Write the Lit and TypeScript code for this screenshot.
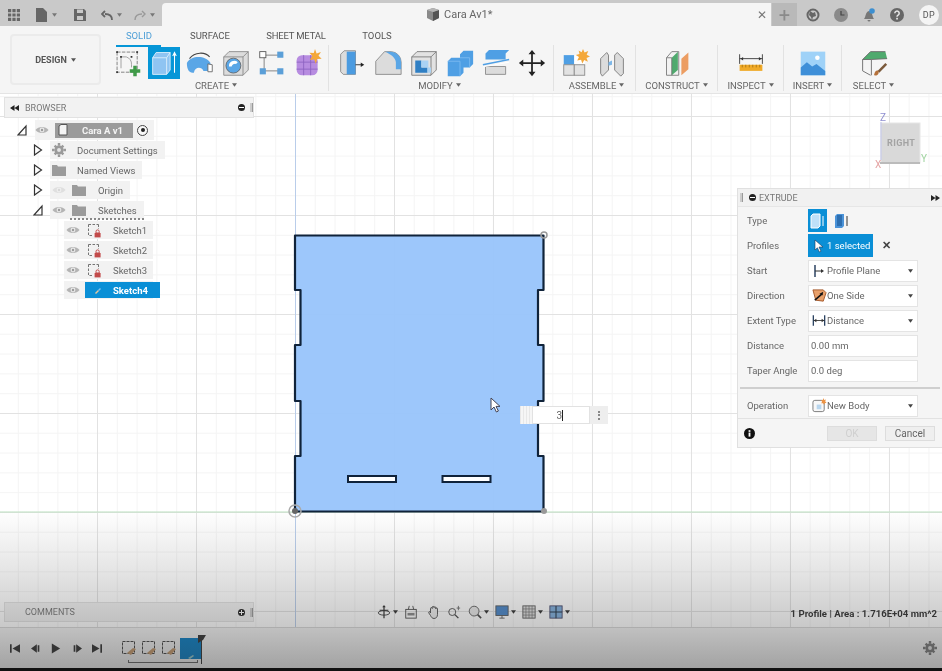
import {LitElement, css, html, nothing} from 'lit';
import {customElement} from 'lit/decorators.js';

const caret = html`<svg class="caret" viewBox="0 0 6 4" width="5" height="4"><path d="M0 0h6L3 4z" fill="currentColor"/></svg>`;

const eye = (faded = false) => html`<svg class="eye ${faded ? 'faded' : ''}" viewBox="0 0 14 10" width="14" height="10">
  <path d="M0.5 5C3 1 11 1 13.5 5 11 9 3 9 0.5 5Z" fill="#b4b4b4"/><circle cx="7" cy="5" r="2.4" fill="#e8e8e8"/><circle cx="7" cy="5" r="1.2" fill="#9a9a9a"/>
</svg>`;

const folder = html`<svg viewBox="0 0 14 12" width="14" height="12"><path d="M0 1h5l1 1.5h8V12H0z" fill="#9b9b9b"/></svg>`;
const gear = (size = 14, color = '#9a9a9a') => html`<svg viewBox="0 0 16 16" width=${size} height=${size}>
  <g fill=${color}><circle cx="8" cy="8" r="5.2"/><path d="M6.6 0h2.8v3H6.6zM6.6 13h2.8v3H6.6zM0 6.6h3v2.8H0zM13 6.6h3v2.8h-3zM2 4l2-2 2 2-2 2zM10 4l2-2 2 2-2 2zM2 12l2-2 2 2-2 2zM10 12l2-2 2 2-2 2z"/></g>
  <circle cx="8" cy="8" r="2.2" fill="#e4e4e4"/>
</svg>`;
const sketchLock = html`<svg viewBox="0 0 15 15" width="15" height="15">
  <path d="M1.5 1.5H11.5M1.5 1.5V12.5H5M11.5 1.5V6" fill="none" stroke="#666" stroke-width=".9" stroke-dasharray="2.5 1.5"/>
  <path d="M9 8.5a1.6 1.6 0 0 1 3.2 0V10H9z" fill="none" stroke="#c34b4b"/><rect x="7.6" y="10" width="6" height="4.4" fill="#c34b4b"/>
</svg>`;
const dblLeft = html`<svg viewBox="0 0 9 6" width="9" height="6"><path d="M4.5 0v6L0 3zM9 0v6L4.5 3z" fill="#222"/></svg>`;
const dblRight = html`<svg viewBox="0 0 9 6" width="9" height="6"><path d="M0 0v6l4.5-3zM4.5 0v6L9 3z" fill="#222"/></svg>`;

const iconSketch = html`<svg viewBox="0 0 32 32">
  <rect x="3.5" y="3.5" width="23" height="23" fill="none" stroke="#666" stroke-width=".9" stroke-dasharray="4 1.5"/>
  <path d="M8 9h6a9 9 0 0 1 6 9v3M8 9v13" fill="none" stroke="#999"/>
  <g fill="#333"><rect x="2.5" y="2.5" width="2" height="2"/><rect x="25.5" y="2.5" width="2" height="2"/><rect x="2.5" y="25.5" width="2" height="2"/><rect x="7" y="8" width="2" height="2"/><rect x="19" y="8" width="2" height="2"/></g>
  <path d="M22 19h4v4h4v4h-4v4h-4v-4h-4v-4h4z" fill="#3f9a48"/>
</svg>`;
const iconExtrude = html`<svg viewBox="0 0 32 32">
  <path d="M3 10l4-6h16v20l-4 5H3z" fill="#8fc4f2" stroke="#dff0fb"/><path d="M3 10h16v19M19 10l4-6" fill="none" stroke="#dff0fb"/>
  <path d="M28 27V5M26 8l2-4 2 4" fill="none" stroke="#fff" stroke-width="1.2"/>
</svg>`;
const iconRevolve = html`<svg viewBox="0 0 32 32">
  <path d="M4 11C10 3 22 3 27 9" fill="none" stroke="#444" stroke-width="1.2"/>
  <path d="M1 16C6 7 22 7 28 16L27 25H20C18 20 10 20 9 27 4 28 1 24 1 16Z" fill="#5aa6e6"/>
  <path d="M25 17l5 1v8h-5z" fill="#fff" stroke="#666"/>
</svg>`;
const iconHole = html`<svg viewBox="0 0 32 32">
  <path d="M2 9l6-6h22v21l-6 6H2z" fill="#dcdcdc" stroke="#888"/><path d="M2 9h22v21M24 9l6-6" fill="none" stroke="#888"/>
  <circle cx="13" cy="19" r="8.5" fill="#5aa6e6" stroke="#666"/><path d="M8 20a6 6 0 0 1 10-5l-2 2a4 4 0 0 0-5 3z" fill="#fff"/>
</svg>`;
const iconPattern = html`<svg viewBox="0 0 32 32">
  <path d="M7 7h18M7 7v18M7 25h18" stroke="#777" fill="none"/>
  <rect x="2" y="3" width="7" height="7" fill="#fff" stroke="#555"/>
  <rect x="22" y="3" width="7" height="7" fill="#5b9fd8"/><rect x="2" y="22" width="7" height="7" fill="#5b9fd8"/><rect x="22" y="22" width="7" height="7" fill="#5b9fd8"/>
</svg>`;
const iconCreateForm = html`<svg viewBox="0 0 32 32">
  <rect x="3" y="7" width="24" height="23" rx="6" fill="#b78ce0"/><path d="M3 15h24M3 23h24M11 7v23M19 7v23" stroke="#8e62c2" fill="none"/>
  <path d="M24 0l1.8 5 5-1.6-2.8 4.4 3.6 3.4-5.2.2L25 17l-2-5.4-5 1 3-4.6-3.4-3.6 5 .3z" fill="#f4a83a"/>
</svg>`;
const iconPress = html`<svg viewBox="0 0 32 32">
  <path d="M3 6l4-4h13v27H6l-3-3z" fill="#dcdcdc" stroke="#888"/><path d="M10 3h10v26H10z" fill="#4b9be0"/>
  <path d="M20 18h7" stroke="#222"/><path d="M26 15.5l4 2.5-4 2.5z" fill="#222"/>
</svg>`;
const iconFillet = html`<svg viewBox="0 0 32 32">
  <path d="M2 14L12 3h8a12 12 0 0 1 11 12v14H2z" fill="#dcdcdc" stroke="#888"/>
  <path d="M13 3h7a12 12 0 0 1 11 12v8h-6V15c0-5-6-9-12-12z" fill="#5aa6e6"/>
</svg>`;
const iconShell = html`<svg viewBox="0 0 32 32">
  <path d="M2 9l6-6h22v21l-6 6H2z" fill="#e2e2e2" stroke="#777"/><path d="M2 9h22v21M24 9l6-6" fill="none" stroke="#777"/>
  <path d="M6 13h7v8h7v6H6z" fill="#2f7fc4"/><path d="M13 13h8v8h-8zM20 21h4v6h-4z" fill="#a9d2f4"/>
</svg>`;
const iconCombine = html`<svg viewBox="0 0 32 32">
  <path d="M2 14l4-4h10V6l4-4h11v15l-4 4h-7v6l-4 4H2z" fill="#4f9fe4"/><path d="M2 14h14v17M16 10h11v11" fill="none" stroke="#7cbaf0"/>
</svg>`;
const iconOffset = html`<svg viewBox="0 0 32 32">
  <path d="M4 5l4-4h23l-4 4v7H4z" fill="#4f9fe4"/><path d="M1 18L31 12" stroke="#4f9fe4" stroke-width="1.5"/>
  <path d="M4 20h23v9H4z" fill="#dcdcdc" stroke="#888"/><path d="M1 20.5L31 15" stroke="#fff"/>
</svg>`;
const iconMove = html`<svg viewBox="0 0 32 32">
  <path d="M16 5v22M5 16h22" stroke="#222" stroke-width="2"/>
  <path d="M16 1l4 5h-8zM16 31l4-5h-8zM1 16l5-4v8zM31 16l-5-4v8z" fill="#222"/>
</svg>`;
const iconComponent = html`<svg viewBox="0 0 32 32">
  <rect x="2" y="7" width="12" height="11" fill="#4f9fe4"/><rect x="14" y="7" width="12" height="11" fill="#fff"/>
  <rect x="2" y="18" width="12" height="12" fill="#e2e2e2" stroke="#888"/><rect x="14" y="18" width="12" height="12" fill="#e2e2e2" stroke="#888"/>
  <path d="M24 0l1.8 4 4.2-1.6-1.8 4.2L32 8.600l-4 1.6 1.6 4.4-4.2-2-2.2 4-1.4-4.4-4.4 1 2-4-3.6-2.4 4.2-1L19 1.6l3.4 2.2z" fill="#f4a83a"/>
</svg>`;
const iconJoint = html`<svg viewBox="0 0 32 32">
  <path d="M3 11l7-7 2 3v17l-7 7-2-3z" fill="#dcdcdc" stroke="#777"/><path d="M29 11l-7-7-3 3v17l7 7 3-3z" fill="#dcdcdc" stroke="#777"/>
  <path d="M12 15l4-2v5l-4 1z" fill="#7db7e8"/>
</svg>`;
const iconConstruct = html`<svg viewBox="0 0 32 32">
  <path d="M4 10l6-7h8v27H4z" fill="#f2f2f2" stroke="#777"/><path d="M10 10l7-7v21l-7 6z" fill="#4faa6e"/><path d="M4 10h6v20" fill="none" stroke="#777"/>
  <path d="M21 11l8-7v19l-8 7z" fill="#ec9d62"/>
</svg>`;
const iconInspect = html`<svg viewBox="0 0 32 32">
  <path d="M3 6v11M29 6v11M3 11h26" stroke="#333" fill="none"/><path d="M4 11l3-2v4zM28 11l-3-2v4z" fill="#333"/>
  <rect x="3" y="18" width="26" height="7" fill="#f0aa28"/><path d="M6 18v3M10 18v3M14 18v3M18 18v3M22 18v3M26 18v3" stroke="#a87413"/>
</svg>`;
const iconInsert = html`<svg viewBox="0 0 32 32">
  <rect x="2" y="3" width="28" height="27" fill="#9fd2f8"/><circle cx="21" cy="10" r="2.6" fill="#fff"/>
  <path d="M2 30V21l7-6 6 5 5-3 10 8v5z" fill="#3e8fd8"/>
</svg>`;
const iconSelect = html`<svg viewBox="0 0 32 32">
  <path d="M3 12L12 3h17l2 8z" fill="#4faa6e"/><path d="M3 12v13l9 5M3 12h10v18M13 12l18-1M3 12L12 3h17" fill="none" stroke="#666"/>
  <path d="M20 25l9-9 2 2-9 9z" fill="#7b5a3c"/><path d="M16 30c1-5 3-6 5-5 1 2 0 6-5 5z" fill="#b5713a"/>
</svg>`;

const cursorIcon = html`<svg class="cursor" viewBox="0 0 12 16" width="12" height="16"><path d="M1 1v12l3-3 2.4 5 2-1-2.4-4.6H10z" fill="#fff" stroke="#445" stroke-width="1"/></svg>`;

const extrudeA = html`<svg viewBox="0 0 16 16" width="16" height="16"><path d="M1 3l2-2h7v12l-2 2H1z" fill="#bfe0f8" stroke="#fff"/><path d="M13 3v10" stroke="#fff"/></svg>`;
const extrudeB = html`<svg viewBox="0 0 16 16" width="16" height="16"><path d="M1 3l2-2h7v12l-2 2H1z" fill="#4b93d8"/><path d="M3 2h5v11H3z" fill="#2e6fb0"/><path d="M13 3v10" stroke="#333"/></svg>`;
const startIcon = html`<svg viewBox="0 0 14 14" width="14" height="14"><path d="M3 1v12" stroke="#1d3557" stroke-width="1.4"/><path d="M3 7h7" stroke="#333"/><path d="M9 5l3 2-3 2z" fill="#333"/></svg>`;
const dirIcon = html`<svg viewBox="0 0 16 16" width="15" height="15"><path d="M1 2h11l3 3-3 9-8-1z" fill="#e8a06a" stroke="#a3582a"/><path d="M3 13L11 6" stroke="#111" stroke-width="1.6"/><path d="M12 4l-1 4-3-2z" fill="#111"/></svg>`;
const distIcon = html`<svg viewBox="0 0 16 14" width="14" height="13"><path d="M1.5 1v12M14.5 1v12" stroke="#1d3557" stroke-width="1.4"/><path d="M2 7h12" stroke="#333"/><path d="M2 7l3-2v4zM14 7l-3-2v4z" fill="#333"/></svg>`;
const bodyIcon = html`<svg viewBox="0 0 16 16" width="15" height="15"><rect x="1" y="2.5" width="12" height="12" rx="2" fill="#f8f8f8" stroke="#777"/><rect x="5" y="7" width="5" height="5" fill="#b9d6ee"/><path d="M12 0l1 2 2-.5L14 3.500l1.5 1.5-2 .5L13 7.5l-1.2-2-2 .2 1-1.8L9.600 2l2 .2z" fill="#ec9344"/></svg>`;
const selectArrow = html`<svg viewBox="0 0 10 14" width="10" height="14"><path d="M1 1v10l2.4-2.2L5.4 13l1.6-.8L5 8h4z" fill="#fff" stroke="#1d3557" stroke-width=".6"/></svg>`;
const infoIcon = html`<svg viewBox="0 0 12 12" width="11" height="11"><circle cx="6" cy="6" r="6" fill="#111"/><rect x="5" y="5" width="2" height="4.4" fill="#fff"/><rect x="5" y="2.4" width="2" height="1.8" fill="#fff"/></svg>`;

const navOrbit = html`<svg viewBox="0 0 16 16" width="14" height="14"><path d="M8 1v14M3 6h10" stroke="#333" stroke-width="1.4"/><ellipse cx="8" cy="9" rx="6.5" ry="2.6" fill="none" stroke="#333"/><path d="M8 0l2 2.6H6z" fill="#333"/></svg>`;
const navLook = html`<svg viewBox="0 0 14 16" width="14" height="14"><rect x="1" y="5" width="12" height="10" fill="none" stroke="#444"/><path d="M3 9h8v3H3z" fill="#888"/><path d="M4 5l1-4M10 5L9 1" stroke="#444"/></svg>`;
const navHand = html`<svg viewBox="0 0 16 16" width="14" height="14"><path d="M4 9V4a1 1 0 0 1 2 0V2.6a1 1 0 0 1 2 0V3a1 1 0 0 1 2 0v1.4a1 1 0 0 1 2 0V11c0 3-2 4.4-4 4.4S5 14 4 12L2 9c-.6-1 .8-2 1.6-1z" fill="#eee" stroke="#444"/></svg>`;
const navZoomFit = html`<svg viewBox="0 0 16 16" width="14" height="14"><circle cx="6" cy="8" r="4" fill="none" stroke="#444"/><path d="M9 11l4 4" stroke="#444" stroke-width="1.6"/><path d="M13 1v5M11 3.5h4" stroke="#666"/></svg>`;
const navZoom = html`<svg viewBox="0 0 16 16" width="14" height="14"><circle cx="7" cy="7" r="5.6" fill="#e8e8e8" stroke="#555"/><path d="M11 11l4 4" stroke="#444" stroke-width="1.8"/></svg>`;
const navDisplay = html`<svg viewBox="0 0 16 16" width="14" height="14"><rect x="1" y="1" width="14" height="11" fill="#4a86c8" stroke="#555"/><path d="M5 15h6M8 12v3" stroke="#555"/></svg>`;
const navGrid = html`<svg viewBox="0 0 16 16" width="14" height="14"><rect x="1" y="1" width="14" height="14" fill="#ddd" stroke="#555"/><path d="M4.5 1v14M8 1v14M11.5 1v14M1 4.5h14M1 8h14M1 11.5h14" stroke="#666" stroke-width=".7"/></svg>`;
const navView = html`<svg viewBox="0 0 16 16" width="14" height="14"><rect x="1" y="1" width="14" height="14" fill="#7faedc" stroke="#446"/><path d="M8 1v14M1 8h14" stroke="#234" stroke-width="1.2"/></svg>`;

const tlSketch = html`<svg viewBox="0 0 16 16" width="16" height="16"><rect x="1.5" y="1.5" width="12" height="12" fill="none" stroke="#444" stroke-dasharray="3 1"/><path d="M6 13l6-5 3 1-5 6z" fill="#c89c6e"/></svg>`;

const tree = [
  {label: 'Document Settings', icon: gear(), tri: 'closed', eye: false},
  {label: 'Named Views', icon: folder, tri: 'closed', eye: false},
  {label: 'Origin', icon: folder, tri: 'closed', eye: true, faded: true},
  {label: 'Sketches', icon: folder, tri: 'open', eye: true, wavy: true},
];
const sketches = ['Sketch1', 'Sketch2', 'Sketch3'];

const controls = [
  {label: 'Start', icon: startIcon, value: 'Profile Plane'},
  {label: 'Direction', icon: dirIcon, value: 'One Side'},
  {label: 'Extent Type', icon: distIcon, value: 'Distance'},
];

@customElement('app-root')
export class AppRoot extends LitElement {
  static styles = css`
    :host {
      display: block;
      height: 671px;
      overflow: hidden;
      font-family: Roboto, "Liberation Sans", Arial, sans-serif;
      color: #555;
      font-size: 9.5px;
    }
    .app {
      position: relative;
      height: 671px;
      display: flex;
      flex-direction: column;
      filter: blur(0.45px);
      background: #fff;
    }
    svg { display: block; flex: none; }

    /* title bar */
    .titlebar {
      display: flex;
      height: 26px;
      flex: none;
      padding-top: 3px;
      box-sizing: border-box;
      background: #c9c9c9;
    }
    .quick {
      width: 162px;
      display: flex;
      align-items: center;
      color: #555;
      box-sizing: border-box;
      padding-left: 8px;
      flex: none;
    }
    .quick .gap1 { margin-left: 16px; }
    .quick .gap2 { margin-left: 17px; }
    .quick .gap3 { margin-left: 15px; }
    .quick .gap4 { margin-left: 12px; }
    .quick .caret { margin-left: 4px; color: #777; }
    .quick .faint { color: #999; }
    .doc {
      width: 609px;
      flex: none;
      box-sizing: border-box;
      display: flex;
      justify-content: space-between;
      align-items: center;
      padding: 0 4px 0 265px;
      background: #f5f5f5;
      border-top-left-radius: 4px;
      font-size: 11px;
      color: #666;
    }
    .doc-title { display: flex; align-items: center; gap: 5px; }
    .close { font-size: 12px; color: #777; line-height: 1; }
    .top-right {
      flex: 1;
      display: flex;
      align-items: center;
      color: #666;
    }
    .plus {
      width: 25px;
      height: 23px;
      display: flex;
      align-items: center;
      justify-content: center;
      background: #b9b9b9;
      font-size: 20px;
      color: #8a8a8a;
      margin-left: 1px;
    }
    .top-icons {
      display: flex;
      align-items: center;
      gap: 14px;
      padding-left: 9px;
    }
    .avatar {
      width: 20px;
      height: 20px;
      border-radius: 50%;
      background: #f4f4f4;
      display: flex;
      align-items: center;
      justify-content: center;
      font-size: 9px;
      letter-spacing: .5px;
      margin-left: 15px;
      color: #555;
    }

    /* ribbon */
    .ribbon {
      display: flex;
      height: 68px;
      flex: none;
      background: #f5f5f5;
      border-bottom: 1px solid #e4e4e4;
      box-sizing: border-box;
    }
    .design-wrap { width: 110px; padding: 8px 0 0 10px; box-sizing: border-box; flex: none; }
    .design {
      width: 91px;
      height: 51px;
      box-sizing: border-box;
      border: 2px solid #ebebeb;
      border-radius: 4px;
      background: #f4f4f4;
      display: flex;
      align-items: center;
      justify-content: center;
      gap: 4px;
      font-size: 9px;
      font-weight: bold;
      color: #555;
    }
    .ribbon-main { flex: 1; display: flex; flex-direction: column; }
    .tabs { display: flex; height: 19px; padding-left: 6px; align-items: center; }
    .tab { text-align: center; color: #555; }
    .tab.solid { width: 46px; color: #4e9fd6; }
    .tab.surface { width: 96px; }
    .tab.sheet { width: 76px; letter-spacing: -.2px; }
    .tab.tools { width: 86px; }
    .groups { display: flex; flex: 1; min-height: 0; }
    .group {
      display: flex;
      flex-direction: column;
      align-items: center;
      box-sizing: border-box;
      border-right: 1px solid #e2e2e2;
      margin-bottom: 2px;
    }
    .create { width: 219px; align-items: flex-start; }
    .modify { width: 225px; padding-left: 5px; align-items: flex-start; }
    .assemble { width: 82px; padding-left: 4px; align-items: flex-start; }
    .construct { width: 82px; }
    .inspect { width: 66px; }
    .insert { width: 58px; }
    .select { width: 63px; border-right: 0; }
    .icons { display: flex; height: 35px; align-items: center; }
    .slot { width: 36px; height: 34px; display: flex; align-items: center; justify-content: center; }
    .slot svg { width: 28px; height: 28px; }
    .slot.active { position: relative; background: #0696d7; height: 32px; width: 32px; margin: 0 2px; }
    .create .active::before {
      content: "";
      position: absolute;
      left: -32px;
      top: -2px;
      width: 45px;
      height: 2px;
      background: #0696d7;
    }
    .group-label {
      display: flex;
      align-items: center;
      gap: 3px;
      height: 10px;
      color: #666;
      align-self: center;
    }
    .create .group-label { margin-right: 6px; }
    .modify .group-label { margin-right: 8px; }

    /* viewport */
    .viewport {
      position: relative;
      flex: 1;
      min-height: 0;
      background-color: #fff;
      background-image:
        linear-gradient(to right, #e2e2e2 1px, transparent 1px),
        linear-gradient(to bottom, #e2e2e2 1px, transparent 1px),
        linear-gradient(to right, #f4f4f4 1px, transparent 1px),
        linear-gradient(to bottom, #f4f4f4 1px, transparent 1px);
      background-size: 99px 99px, 99px 99px, 19.8px 19.8px, 19.8px 19.8px;
      background-position: 97px 22px, 97px 22px, 97px 22px, 97px 22px;
    }
    .scene { position: absolute; left: 0; top: 0; }
    .cube-label { font: bold 9px Roboto, "Liberation Sans", Arial, sans-serif; fill: #a3a3a3; letter-spacing: .4px; }
    .axis-label { font: 10px Roboto, "Liberation Sans", Arial, sans-serif; }

    .panel-head {
      display: flex;
      align-items: center;
      box-sizing: border-box;
      height: 21px;
      background: #f2f2f2;
      border: 1px solid #e2e2e2;
      padding: 0 0 0 5px;
      color: #777;
      font-size: 9px;
    }
    .panel-head .name { margin-left: 6px; flex: 1; }
    .minus {
      width: 7px;
      height: 7px;
      border-radius: 50%;
      background: #222;
      position: relative;
      margin-right: 5px;
    }
    .minus::after { content: ""; position: absolute; left: 1px; right: 1px; top: 3px; height: 1px; background: #fff; }
    .minus.add::before { content: ""; position: absolute; top: 1px; bottom: 1px; left: 3px; width: 1px; background: #fff; }
    .grip { width: 2px; height: 9px; background: #ccc; border-right: 1px solid #999; }

    .browser { position: absolute; left: 4px; top: 3px; width: 250px; }
    .tree { display: flex; flex-direction: column; padding-top: 2px; }
    .row { display: flex; align-items: center; height: 20px; color: #666; }
    .tri { width: 10px; height: 12px; flex: none; }
    .pill { display: flex; align-items: center; height: 18px; background: #f2f2f2; }
    .root-row { padding-left: 13px; }
    .root-row .pill { margin-left: 8px; height: 20px; padding-right: 6px; }
    .root-name {
      display: flex;
      align-items: center;
      width: 78px;
      height: 15px;
      background: #9b9b9b;
      color: #f4f4f4;
      font-weight: bold;
      margin-left: 6px;
      box-sizing: border-box;
      padding-left: 3px;
    }
    .root-name span { margin-left: 14px; }
    .radio { width: 9px; height: 9px; border: 1px solid #444; border-radius: 50%; margin-left: 4px; position: relative; background: #f8f8f8; }
    .radio::after { content: ""; position: absolute; inset: 2.5px; border-radius: 50%; background: #222; }
    .l1 { padding-left: 29px; }
    .l1 .pill { margin-left: 7px; padding: 0 7px 0 2px; }
    .l1-icon { width: 14px; display: flex; }
    .doc-text { margin-left: 11px; }
    .eye-gap { margin-left: 6px; }
    .eye-text { margin-left: 12px; }
    .eye.faded { opacity: .3; }
    .pill.wavy { position: relative; }
    .pill.wavy::after {
      content: "";
      position: absolute;
      left: 20px;
      right: 0;
      bottom: -1px;
      border-bottom: 2px dotted #888;
    }
    .l2 { padding-left: 60px; }
    .l2 .pill { width: 89px; padding-left: 2px; box-sizing: border-box; }
    .l2 .sk-icon { margin-left: 7px; }
    .l2 .sk-text { margin-left: 11px; }
    .sk-sel {
      display: flex;
      flex: none;
      align-items: center;
      width: 75px;
      height: 16px;
      margin-left: 5px;
      background: #0a8fd6;
      color: #fff;
      font-weight: bold;
      padding-left: 9px;
      gap: 12px;
      box-sizing: border-box;
    }

    .comments { position: absolute; left: 4px; bottom: 5px; width: 250px; }
    .comments .panel-head { height: 20px; padding-left: 14px; }

    /* extrude dialog */
    .extrude {
      position: absolute;
      left: 737px;
      top: 94px;
      width: 205px;
      height: 260px;
      box-sizing: border-box;
      background: #f5f5f5;
      border: 1px solid #e0e0e0;
      border-right: 0;
      display: flex;
      flex-direction: column;
      color: #666;
    }
    .extrude-head {
      display: flex;
      align-items: center;
      height: 18px;
      flex: none;
      padding: 0 2px 0 2px;
      background: #f1f1f1;
      border-bottom: 1px solid #e6e6e6;
      box-sizing: border-box;
      font-size: 9px;
      color: #777;
    }
    .extrude-head .minus { margin: 0 3px 0 6px; }
    .extrude-head .t { flex: 1; }
    .ex-rows { padding-top: 1px; display: flex; flex-direction: column; }
    .ex-row { display: flex; align-items: center; height: 25px; padding-left: 9px; flex: none; }
    .ex-label { width: 61px; flex: none; }
    .type-btn { width: 19px; height: 23px; display: flex; align-items: center; justify-content: center; }
    .type-btn.on { background: #0a8fd6; }
    .type-btn + .type-btn { margin-left: 5px; }
    .sel-btn {
      display: flex;
      align-items: center;
      gap: 3px;
      width: 65px;
      height: 23px;
      box-sizing: border-box;
      padding-left: 6px;
      background: #0a8fd6;
      color: #fff;
    }
    .x { margin-left: 9px; font-size: 11px; color: #444; font-weight: bold; }
    .dd, .num {
      width: 110px;
      height: 22px;
      box-sizing: border-box;
      display: flex;
      align-items: center;
      background: #fff;
      border: 1px solid #e4e4e4;
    }
    .dd { padding: 0 4px 0 2px; justify-content: flex-start; }
    .dd .val { flex: 1; }
    .dd-icon { width: 16px; display: flex; justify-content: center; }
    .dd .caret { color: #444; }
    .num { padding-left: 2px; }
    .ex-sep { height: 2px; margin: 4px 2px 4px 2px; background: #cfcfcf; flex: none; }
    .ex-foot {
      display: flex;
      align-items: center;
      flex: 1;
      border-top: 1px solid #e2e2e2;
      padding: 0 6px 0 6px;
    }
    .btn {
      width: 50px;
      height: 15px;
      box-sizing: border-box;
      display: flex;
      align-items: center;
      justify-content: center;
      border: 1px solid #ddd;
      background: #efefef;
      font-size: 10px;
    }
    .btn.ok { margin-left: 72px; color: #cfcfcf; background: #e6e6e6; }
    .btn.cancel { margin-left: 8px; color: #666; }

    .float-input {
      position: absolute;
      left: 520px;
      top: 312px;
      width: 88px;
      height: 18px;
      display: flex;
      color: #666;
      font-size: 10px;
    }
    .fi-grip { width: 12px; background: repeating-linear-gradient(to right, #e8e8e8 0 1px, #f6f6f6 1px 3px); }
    .fi-box {
      width: 58px;
      box-sizing: border-box;
      background: #fff;
      border: 1px solid #e2e2e2;
      display: flex;
      align-items: center;
      justify-content: flex-end;
      padding-right: 26px;
    }
    .fi-caret { width: 1px; height: 11px; background: #222; }
    .fi-more {
      flex: 1;
      background: #eee;
      display: flex;
      flex-direction: column;
      align-items: center;
      justify-content: center;
      gap: 1.5px;
    }
    .fi-more i { width: 2px; height: 2px; background: #666; border-radius: 50%; }
    .cursor { position: absolute; left: 490px; top: 303px; }

    .nav {
      position: absolute;
      left: 377px;
      bottom: 8px;
      display: flex;
      align-items: center;
      gap: 6px;
      color: #333;
    }
    .nav-item { display: flex; align-items: center; gap: 2px; }
    .nav .hand { margin-left: 3px; }
    .nav .zoom { margin-left: 1px; }
    .status {
      position: absolute;
      right: 5px;
      bottom: 8px;
      font-size: 9.6px;
      font-weight: bold;
      color: #333;
    }

    /* timeline */
    .timeline {
      flex: none;
      height: 41px;
      box-sizing: border-box;
      display: flex;
      align-items: center;
      background: #f4f4f4;
      border-top: 1px solid #d8d8d8;
      padding-left: 10px;
    }
    .tl-controls { display: flex; gap: 10.5px; align-items: center; }
    .tl-controls svg { width: 10px; height: 11px; }
    .tl-track { display: flex; align-items: center; margin-left: 19px; gap: 4px; position: relative; }
    .tl-track::after {
      content: "";
      position: absolute;
      left: 7px;
      width: 70px;
      top: 22px;
      height: 3px;
      box-sizing: border-box;
      border: 1px solid #666;
      border-top: 0;
    }
    .tl-sel { width: 21px; height: 21px; background: #0a7fc6; display: flex; align-items: flex-end; justify-content: center; margin-left: -1px; position: relative; }
    .tl-sel::before { content: ""; position: absolute; right: -1px; top: 0; width: 1px; height: 26px; background: #333; }
    .tl-sel::after { content: ""; position: absolute; right: -5px; top: -3px; border: 3px solid transparent; border-top: 5px solid #333; border-left: 5px solid #333; }
    .tl-gear { margin-left: auto; margin-right: 5px; }
    .edge { height: 3px; flex: none; background: #111; }
    .fade {
      position: absolute;
      left: 0;
      right: 0;
      top: 510px;
      bottom: 3px;
      pointer-events: none;
      background: linear-gradient(to bottom, rgba(60,60,60,0) 0%, rgba(60,60,60,.12) 35%, rgba(60,60,60,.28) 74%, rgba(50,50,50,.42) 100%);
    }
  `;

  renderTopBar() {
    return html`
      <div class="titlebar">
        <div class="quick">
          <svg viewBox="0 0 13 13" width="12" height="12"><path d="M0 0h3.5v3.5H0zM4.75 0h3.5v3.5h-3.5zM9.5 0H13v3.5H9.5zM0 4.75h3.5v3.5H0zM4.75 4.75h3.5v3.5h-3.5zM9.5 4.75H13v3.5H9.5zM0 9.5h3.5V13H0zM4.75 9.5h3.5V13h-3.5zM9.5 9.5H13V13H9.5z" fill="#666"/></svg>
          <svg class="gap1" viewBox="0 0 12 14" width="12" height="14"><path d="M0 0h7l4 4v10H0z" fill="#666"/></svg>${caret}
          <svg class="gap2" viewBox="0 0 12 12" width="12" height="12"><path d="M0 0h10l2 2v10H0z" fill="#666"/><rect x="3" y="0.5" width="6" height="3.5" fill="#c9c9c9"/><rect x="3" y="7" width="6" height="4" fill="#c9c9c9"/></svg>
          <svg class="gap3" viewBox="0 0 12 12" width="12" height="12"><path d="M11 11c0-4-2-6-7-6M4 2L1 5l3 3" fill="none" stroke="#666" stroke-width="1.8"/></svg>${caret}
          <svg class="gap4" viewBox="0 0 12 12" width="12" height="12"><path d="M1 11c0-4 2-6 7-6M8 2l3 3-3 3" fill="none" stroke="#999" stroke-width="1.4"/></svg><span class="faint">${caret}</span>
        </div>
        <div class="doc">
          <div class="doc-title">
            <svg viewBox="0 0 12 13" width="12" height="13"><path d="M0 2l6-2 6 2v8l-6 3-6-3z" fill="#8a8a8a"/><path d="M6 4l6-2v8l-6 3z" fill="#555"/><path d="M0 2l6 2 6-2-6-2z" fill="#b5b5b5"/></svg>
            <span>Cara Av1*</span>
          </div>
          <span class="close">✕</span>
        </div>
        <div class="top-right">
          <div class="plus">+</div>
          <div class="top-icons">
            <svg viewBox="0 0 14 14" width="14" height="14"><circle cx="7" cy="7" r="5.5" fill="none" stroke="#666" stroke-width="2"/><path d="M4 3l3 2 2-1 1 4-3 1-1 3-1-3-2-2z" fill="#666"/></svg>
            <svg viewBox="0 0 14 14" width="14" height="14"><circle cx="7" cy="7" r="7" fill="#8a8a8a"/><path d="M7 3v4h3.5" fill="none" stroke="#444" stroke-width="1.2"/></svg>
            <svg viewBox="0 0 14 14" width="14" height="14"><path d="M2 11c2-2 1-7 5-8 4 1 3 6 5 8z" fill="#777"/><path d="M5.5 12a1.5 1.5 0 0 0 3 0z" fill="#777"/><circle cx="10" cy="3" r="2.8" fill="#3d8fd0"/></svg>
            <svg viewBox="0 0 14 14" width="14" height="14"><circle cx="7" cy="7" r="7" fill="#666"/><path d="M4.8 5.2a2.2 2.2 0 1 1 3.3 2c-.8.5-1.1.9-1.1 1.6" fill="none" stroke="#e8e8e8" stroke-width="1.5"/><rect x="6.2" y="9.8" width="1.7" height="1.7" fill="#e8e8e8"/></svg>
          </div>
          <div class="avatar">DP</div>
        </div>
      </div>
    `;
  }

  renderGroup(cls: string, label: string, icons: unknown[], active = -1) {
    return html`
      <div class="group ${cls}">
        <div class="icons">
          ${icons.map((ic, i) => html`<div class="slot ${i === active ? 'active' : ''}">${ic}</div>`)}
        </div>
        <div class="group-label">${label}${caret}</div>
      </div>
    `;
  }

  renderRibbon() {
    return html`
      <div class="ribbon">
        <div class="design-wrap"><div class="design">DESIGN ${caret}</div></div>
        <div class="ribbon-main">
          <div class="tabs">
            <div class="tab solid">SOLID</div>
            <div class="tab surface">SURFACE</div>
            <div class="tab sheet">SHEET METAL</div>
            <div class="tab tools">TOOLS</div>
          </div>
          <div class="groups">
            ${this.renderGroup('create', 'CREATE', [iconSketch, iconExtrude, iconRevolve, iconHole, iconPattern, iconCreateForm], 1)}
            ${this.renderGroup('modify', 'MODIFY', [iconPress, iconFillet, iconShell, iconCombine, iconOffset, iconMove])}
            ${this.renderGroup('assemble', 'ASSEMBLE', [iconComponent, iconJoint])}
            ${this.renderGroup('construct', 'CONSTRUCT', [iconConstruct])}
            ${this.renderGroup('inspect', 'INSPECT', [iconInspect])}
            ${this.renderGroup('insert', 'INSERT', [iconInsert])}
            ${this.renderGroup('select', 'SELECT', [iconSelect])}
          </div>
        </div>
      </div>
    `;
  }

  triangle(kind: string) {
    return kind === 'open'
      ? html`<svg class="tri" viewBox="0 0 10 12"><path d="M1 11L9 2v9z" fill="none" stroke="#333" stroke-width="1.2"/></svg>`
      : html`<svg class="tri" viewBox="0 0 10 12"><path d="M1.5 1l7 5-7 5z" fill="none" stroke="#333" stroke-width="1.2"/></svg>`;
  }

  renderBrowser() {
    return html`
      <div class="browser">
        <div class="panel-head">
          ${dblLeft}<span class="name">BROWSER</span><span class="minus"></span><span class="grip"></span>
        </div>
        <div class="tree">
          <div class="row root-row">
            ${this.triangle('open')}
            <div class="pill">
              ${eye()}
              <div class="root-name">
                <svg viewBox="0 0 10 12" width="10" height="12"><path d="M1 2l2-1.5h6V11H1z" fill="#f4f4f4" stroke="#555"/></svg>
                <span>Cara A v1</span>
              </div>
              <div class="radio"></div>
            </div>
          </div>
          ${tree.map((t) => html`
            <div class="row l1">
              ${this.triangle(t.tri)}
              <div class="pill ${t.wavy ? 'wavy' : ''}">
                ${t.eye ? html`${eye(t.faded)}<span class="eye-gap"></span>` : nothing}
                <span class="l1-icon">${t.icon}</span>
                <span class="${t.eye ? 'eye-text' : 'doc-text'}">${t.label}</span>
              </div>
            </div>
          `)}
          ${sketches.map((s) => html`
            <div class="row l2">
              <div class="pill">${eye()}<span class="sk-icon">${sketchLock}</span><span class="sk-text">${s}</span></div>
            </div>
          `)}
          <div class="row l2">
            <div class="pill">${eye()}<div class="sk-sel">
              <svg viewBox="0 0 7 7" width="7" height="7"><path d="M1 6l3-3 1 1-3 3z" fill="#e8c79c"/><path d="M4 3l2-2 1 1-2 2z" fill="#7fc2ee"/></svg>
              <span>Sketch4</span>
            </div></div>
          </div>
        </div>
      </div>
    `;
  }

  renderExtrude() {
    return html`
      <div class="extrude">
        <div class="extrude-head">
          <span class="grip"></span><span class="minus"></span><span class="t">EXTRUDE</span>${dblRight}
        </div>
        <div class="ex-rows">
          <div class="ex-row">
            <span class="ex-label">Type</span>
            <div class="type-btn on">${extrudeA}</div><div class="type-btn">${extrudeB}</div>
          </div>
          <div class="ex-row">
            <span class="ex-label">Profiles</span>
            <div class="sel-btn">${selectArrow}<span>1 selected</span></div><span class="x">✕</span>
          </div>
          ${controls.map((c) => html`
            <div class="ex-row">
              <span class="ex-label">${c.label}</span>
              <div class="dd"><span class="dd-icon">${c.icon}</span><span class="val">${c.value}</span>${caret}</div>
            </div>
          `)}
          <div class="ex-row"><span class="ex-label">Distance</span><div class="num">0.00 mm</div></div>
          <div class="ex-row"><span class="ex-label">Taper Angle</span><div class="num">0.0 deg</div></div>
          <div class="ex-sep"></div>
          <div class="ex-row">
            <span class="ex-label">Operation</span>
            <div class="dd"><span class="dd-icon">${bodyIcon}</span><span class="val">New Body</span>${caret}</div>
          </div>
        </div>
        <div class="ex-foot">
          ${infoIcon}
          <div class="btn ok">OK</div>
          <div class="btn cancel">Cancel</div>
        </div>
      </div>
    `;
  }

  renderScene() {
    return html`
      <svg class="scene" width="942" height="533" viewBox="0 94 942 533">
        <path d="M295.5 94V627" stroke="#b9cdea" stroke-width="1"/>
        <path d="M0 512H942" stroke="#bfe3c3" stroke-width="1"/>
        <path fill="#98c4fb" fill-opacity=".95" stroke="#10233a" stroke-width="2.2" stroke-linejoin="round" d="M295 235.5H543.5V290H538V345H543.5V401H538V456H543.5V511.5H295V456H300.5V401H295V345H300.5V290H295Z"/>
        <rect x="348" y="476" width="48" height="6" fill="#fff" stroke="#10233a" stroke-width="2"/>
        <rect x="442.5" y="476" width="48" height="6" fill="#fff" stroke="#10233a" stroke-width="2"/>
        <circle cx="544" cy="235" r="3" fill="none" stroke="#999" stroke-width="1.5"/>
        <circle cx="544" cy="511" r="3" fill="#999"/>
        <circle cx="295" cy="511" r="6" fill="none" stroke="#aaa" stroke-width="1.5"/>
        <circle cx="295" cy="511" r="3" fill="#666"/>

        <rect x="881" y="123" width="39" height="40" fill="#d9d9d9" stroke="#e6e6e6"/>
        <text class="cube-label" x="887" y="146">RIGHT</text>
        <path d="M880 163H920" stroke="#bbb" stroke-width="2"/>
        <path d="M881 122V160" stroke="#bfc3e8"/>
        <text class="axis-label" x="880" y="121" fill="#8f8fd0">Z</text>
        <text class="axis-label" x="921" y="162" fill="#9fd39f">Y</text>
        <text class="axis-label" x="875" y="168" fill="#e5a5a5">X</text>
      </svg>
    `;
  }

  renderNav() {
    return html`
      <div class="nav">
        <span class="nav-item">${navOrbit}${caret}</span>
        ${navLook}
        <span class="hand">${navHand}</span>
        ${navZoomFit}
        <span class="nav-item zoom">${navZoom}${caret}</span>
        <span class="nav-item">${navDisplay}${caret}</span>
        <span class="nav-item">${navGrid}${caret}</span>
        <span class="nav-item">${navView}${caret}</span>
      </div>
      <div class="status">1 Profile | Area : 1.716E+04 mm^2</div>
    `;
  }

  renderTimeline() {
    return html`
      <div class="timeline">
        <div class="tl-controls">
          <svg viewBox="0 0 12 12"><path d="M0 1h2v10H0zM12 1v10L3 6z" fill="#333"/></svg>
          <svg viewBox="0 0 12 12"><path d="M7 1v10L0 6zM8 2h2v8H8z" fill="#333"/></svg>
          <svg viewBox="0 0 12 12"><path d="M1 0l10 6-10 6z" fill="#333"/></svg>
          <svg viewBox="0 0 12 12"><path d="M5 1v10l7-5zM2 2h2v8H2z" fill="#333"/></svg>
          <svg viewBox="0 0 12 12"><path d="M0 1v10l9-5zM10 1h2v10h-2z" fill="#333"/></svg>
        </div>
        <div class="tl-track">
          ${tlSketch}${tlSketch}${tlSketch}
          <div class="tl-sel"><svg viewBox="0 0 8 8" width="8" height="8"><path d="M1 7l5-3 1 1-4 3z" fill="#9cc"/></svg></div>
        </div>
        <span class="tl-gear">${gear(14, '#7c7c7c')}</span>
      </div>
    `;
  }

  render() {
    return html`
      <div class="app">
        ${this.renderTopBar()}
        ${this.renderRibbon()}
        <div class="viewport">
          ${this.renderScene()}
          ${this.renderBrowser()}
          ${this.renderExtrude()}
          ${cursorIcon}
          <div class="float-input">
            <div class="fi-grip"></div>
            <div class="fi-box">3<span class="fi-caret"></span></div>
            <div class="fi-more"><i></i><i></i><i></i></div>
          </div>
          <div class="comments">
            <div class="panel-head"><span class="name">COMMENTS</span><span class="minus add"></span><span class="grip"></span></div>
          </div>
          ${this.renderNav()}
        </div>
        ${this.renderTimeline()}
        <div class="edge"></div>
        <div class="fade"></div>
      </div>
    `;
  }
}
